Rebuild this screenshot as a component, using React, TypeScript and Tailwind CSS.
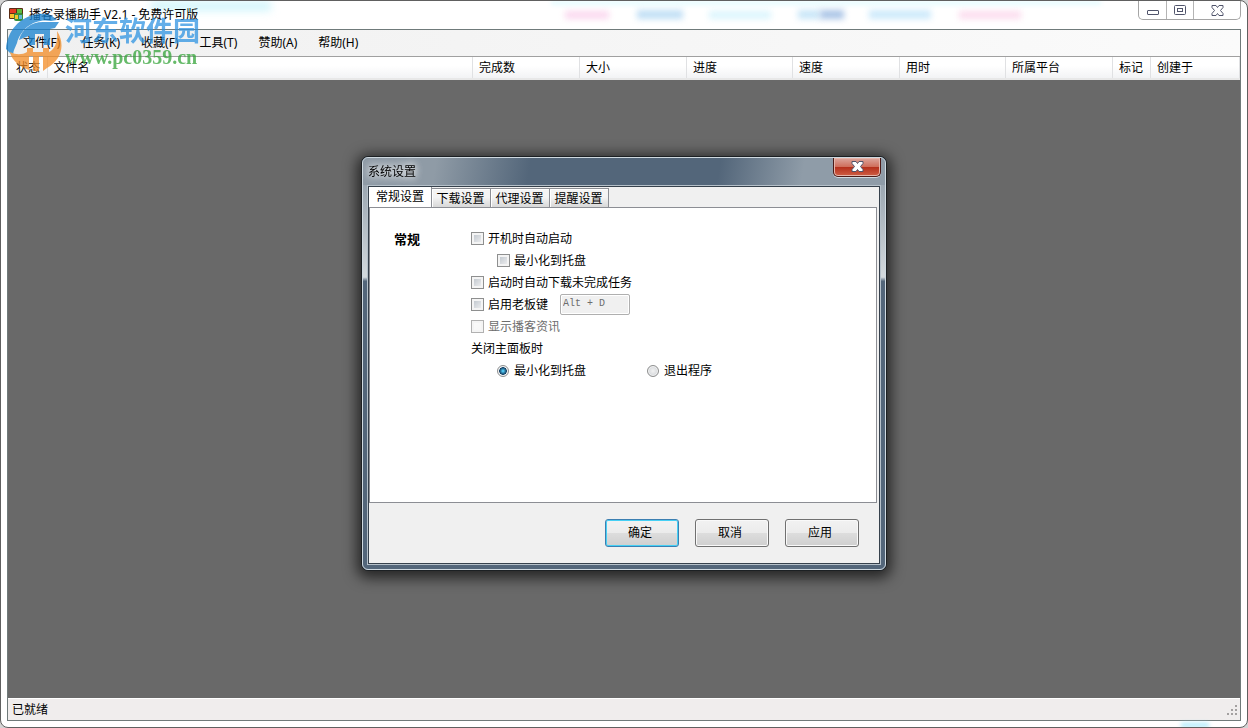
import { useState } from "react";
import type { ReactNode } from "react";

const menus = ["文件(F)", "任务(K)", "收藏(F)", "工具(T)", "赞助(A)", "帮助(H)"];

const columns = [
  { title: "状态", width: "w-[39px]" },
  { title: "文件名", width: "w-auto" },
  { title: "完成数", width: "w-[107px]" },
  { title: "大小", width: "w-[107px]" },
  { title: "进度", width: "w-[106px]" },
  { title: "速度", width: "w-[107px]" },
  { title: "用时", width: "w-[106px]" },
  { title: "所属平台", width: "w-[107px]" },
  { title: "标记", width: "w-[38px]" },
  { title: "创建于", width: "w-[89px]" },
];

const tabs = ["常规设置", "下载设置", "代理设置", "提醒设置"];

const AppIcon = () => (
  <svg width="16" height="16" viewBox="0 0 16 16">
    <rect x="0" y="1" width="14" height="11" rx="1" fill="#5a2c14" />
    <rect x="1" y="2" width="6" height="4" fill="#e23a22" />
    <rect x="8" y="2" width="5" height="4" fill="#5dbb3f" />
    <rect x="1" y="7" width="4" height="4" fill="#f6c32a" />
    <rect x="5" y="6" width="9" height="8" rx="2" fill="#3a8f3c" />
    <rect x="6" y="8" width="3" height="4" fill="#f0c530" />
    <rect x="10" y="8" width="3" height="4" fill="#63b7d8" />
  </svg>
);

const Watermark = () => (
  <div className="pointer-events-none absolute top-[11px] left-1 flex opacity-75">
    <svg width="60" height="60" viewBox="0 0 60 60">
      <path d="M1 37C2 20 14 4 34 2c9-1 14 2 18 6l-6 1C30 6 16 16 12 31l-3 7c-1 3-1 5 0 7z" fill="#1580cf" />
      <path d="M14 28C17 17 26 10 38 10h16l-4 6-5 1v16h-6V22h-9v11h-6v-9c-4 1-7 3-10 4z" fill="#1580cf" />
      <path d="M5 40c6 3 12 3 17 0v-4h6v4h10v-4h6v4c6-3 9-10 8-21 9 14 4 29-10 37l-4 3V44h-4v15h-6V44h-4v14C15 55 7 49 5 40z" fill="#f38b25" />
    </svg>
    <div className="flex flex-col pt-[5px]">
      <span className="text-[27px] leading-7 font-bold text-[#2f94e2]">河东软件园</span>
      <span className="font-['Liberation_Serif',serif] text-xl leading-6 font-bold text-[#33a338]">
        www.pc0359.cn
      </span>
    </div>
  </div>
);

// what shows through the glass of the title bar
const GlassBlur = () => (
  <div className="pointer-events-none absolute inset-0 overflow-hidden rounded-lg">
    <div className="absolute top-0 left-[150px] h-[10px] w-[120px] bg-[#d2f6fc] blur-xs" />
    <div className="absolute top-0 left-[550px] h-1 w-[550px] bg-[#e4fcff] blur-[2px]" />
    <div className="absolute top-[10px] left-[564px] h-2 w-[44px] bg-[#fbd8ef] blur-[3px]" />
    <div className="absolute top-[9px] left-[636px] h-[9px] w-[46px] bg-[#c0dff5] blur-[3px]" />
    <div className="absolute top-[10px] left-[708px] h-2 w-[62px] bg-[#dbf5fd] blur-[3px]" />
    <div className="absolute top-[9px] left-[797px] h-[9px] w-[22px] bg-[#c8e6f8] blur-[3px]" />
    <div className="absolute top-[9px] left-[819px] h-[9px] w-6 bg-[#a9c4e6] blur-[3px]" />
    <div className="absolute top-[9px] left-[868px] h-[9px] w-[62px] bg-[#cdeafb] blur-[3px]" />
    <div className="absolute top-[10px] left-[958px] h-2 w-[62px] bg-[#fcdcee] blur-[3px]" />
    <div className="absolute bottom-0 left-[1180px] h-1 w-7 bg-[#a9e9fb] blur-[2px]" />
  </div>
);

const CloseGlyph = () => (
  <svg width="13" height="11" viewBox="0 0 13 11">
    <path
      d="M1 0.500h4l1.500 2 1.500-2h4v2L9.500 5.500l2.500 3v2H8l-1.500-2-1.500 2H1v-2l2.500-3L1 2.500z"
      fill="#fff"
      stroke="#50546b"
      strokeLinejoin="round"
    />
  </svg>
);

const WindowButtons = () => (
  <div className="flex h-[19px] rounded-b-[5px] border border-t-0 border-[#a5a5a5]">
    <button aria-label="最小化" className="flex w-7 items-center justify-center border-r border-[#b4b4b4]">
      <svg width="12" height="12" viewBox="0 0 12 12">
        <rect x="0.500" y="6.500" width="11" height="4" rx="0.500" fill="#fff" stroke="#50546b" />
      </svg>
    </button>
    <button aria-label="还原" className="flex w-[27px] items-center justify-center border-r border-[#b4b4b4]">
      <svg width="12" height="10" viewBox="0 0 12 10">
        <rect x="0.500" y="0.500" width="11" height="9" rx="1" fill="#fff" stroke="#50546b" />
        <rect x="3.500" y="3.500" width="5" height="3" fill="#fff" stroke="#50546b" />
      </svg>
    </button>
    <button aria-label="关闭" className="flex w-[46px] items-center justify-center">
      <CloseGlyph />
    </button>
  </div>
);

type CheckProps = { label: string; disabled?: boolean; className?: string };

const Check = ({ label, disabled, className = "" }: CheckProps) => (
  <label className={`flex h-[22px] items-center gap-1 ${disabled ? "text-[#6d6d6d]" : ""} ${className}`}>
    <input
      type="checkbox"
      disabled={disabled}
      className="size-[13px] appearance-none border border-[#8e8f8f] bg-linear-to-br from-[#b9c0c8] to-[#f6f6f6] shadow-[inset_0_0_0_2px_#f4f4f4] checked:bg-[#2a6a9c] disabled:border-[#b1b1b1] disabled:from-[#fafafa]"
    />
    {label}
  </label>
);

const Radio = ({ label, defaultChecked }: { label: string; defaultChecked?: boolean }) => (
  <label className="flex h-[22px] items-center gap-[5px]">
    <input
      type="radio"
      name="close-action"
      defaultChecked={defaultChecked}
      className="size-3 appearance-none rounded-full border border-[#8e8f8f] bg-radial from-[#f2f2f2] to-[#c9cdd2] shadow-[inset_0_0_0_1px_#f4f4f4] checked:from-[#4fc3ee] checked:from-10% checked:via-[#123f63] checked:via-50% checked:to-[#eef3f6] checked:to-60%"
    />
    {label}
  </label>
);

const DialogButton = ({ children, primary }: { children: ReactNode; primary?: boolean }) => (
  <button
    className={`h-7 w-[74px] rounded-[3px] border pr-1 ${
      primary
        ? "border-[#3c7fb1] shadow-[inset_0_0_0_1px_#46d0f5]"
        : "border-[#707070] shadow-[inset_0_0_0_1px_#f9f9f9]"
    } bg-[linear-gradient(#f2f2f2,#ebebeb_49%,#dddddd_50%,#cfcfcf)]`}
  >
    {children}
  </button>
);

const SettingsDialog = () => {
  const [active, setActive] = useState(0);

  return (
    <div
      role="dialog"
      aria-label="系统设置"
      className="flex w-[526px] flex-col rounded-[7px] border border-[#1c2023] bg-[#53667a] shadow-[0_3px_14px_4px_rgba(0,0,0,0.65)]"
    >
      <div className="flex flex-col rounded-md border border-[#cfd9e0] bg-linear-to-b from-[#8c99a5] from-0% via-[#d3d9dd] via-29% to-[#53667a] to-30% px-1 pb-1">
        <div className="-mx-1 flex h-[27px] items-start justify-between rounded-t-md bg-[linear-gradient(100deg,#8f9ba6_14%,#53667a_32%,#53667a_68%,#8f9ca8_84%)] pl-[5px]">
          <span className="leading-[28px] [text-shadow:0_0_8px_#fff,0_0_8px_#fff]">系统设置</span>
          <button
            aria-label="关闭"
            className="mr-1 flex h-[19px] w-12 items-center justify-center rounded-b-[5px] border border-t-0 border-[#4c1b18] bg-[linear-gradient(#dda79e,#cf6f5c_48%,#b5301c_52%,#cf5f45)] shadow-[inset_0_0_0_1px_#e6b5aa,0_1px_0_#cfd9e0]"
          >
            <CloseGlyph />
          </button>
        </div>
        <div className="border border-[#b5c0c9]">
          <div className="border border-[#36414c] bg-[#f0f0f0]">
            <div role="tablist" className="flex items-end">
              {tabs.map((tab, i) => (
                <button
                  key={tab}
                  role="tab"
                  aria-selected={i === active}
                  onClick={() => setActive(i)}
                  className={
                    i === active
                      ? "h-5 w-[63px] border-r border-[#8c8e94] bg-white"
                      : "h-[19px] w-[59px] border-t border-r border-[#8c8e94] bg-linear-to-b from-[#f4f4f4] from-45% to-[#d8d8d8] pt-[2px] pr-px shadow-[inset_1px_1px_0_#fff]"
                  }
                >
                  {tab}
                </button>
              ))}
            </div>
            <div role="tabpanel" className="mr-[2px] flex min-h-[296px] border border-[#8c8e94] bg-white pt-5">
              <h2 className="w-[101px] pl-6 text-[13px] leading-[22px] font-bold">常规</h2>
              <div className="flex flex-col">
                <Check label="开机时自动启动" />
                <Check label="最小化到托盘" className="ml-[26px]" />
                <Check label="启动时自动下载未完成任务" />
                <div className="flex h-[22px] items-center gap-3">
                  <Check label="启用老板键" />
                  <input
                    aria-label="老板键"
                    defaultValue="Alt + D"
                    disabled
                    className="h-[21px] w-[70px] rounded-xs border border-[#afafaf] bg-[#f0f0f0] px-[2px] pb-[3px] font-['Liberation_Mono',monospace] text-[10px] text-[#6d6d6d] shadow-[inset_0_0_0_1px_#fff]"
                  />
                </div>
                <Check label="显示播客资讯" disabled />
                <span className="h-[22px] leading-[22px]">关闭主面板时</span>
                <div className="ml-[26px] flex gap-[61px]">
                  <Radio label="最小化到托盘" defaultChecked />
                  <Radio label="退出程序" />
                </div>
              </div>
            </div>
            <div className="flex justify-end gap-4 py-4 pr-5">
              <DialogButton primary>确定</DialogButton>
              <DialogButton>取消</DialogButton>
              <DialogButton>应用</DialogButton>
            </div>
          </div>
        </div>
      </div>
    </div>
  );
};

const App = () => {
  return (
    <div className="bg-[#d4d4d4] font-['Noto_Sans','Noto_Sans_CJK_SC',sans-serif] text-xs text-black">
      <div className="relative flex min-h-screen flex-col rounded-lg border border-[#606060] bg-white px-[6px] pb-[6px]">
        <GlassBlur />
        <header className="relative flex h-7 items-start justify-between pl-[2px]">
          <div className="flex items-center gap-1 pt-[5px]">
            <AppIcon />
            <h1 className="leading-[18px]">播客录播助手 V2.1 - 免费许可版</h1>
          </div>
          <WindowButtons />
        </header>
        <main className="flex grow flex-col border border-[#6f7a7a]">
          <nav className="flex h-[26px] items-center gap-[21px] bg-linear-to-r from-[#f0f0f0] to-[#fbfbfb] pl-[15px]">
            {menus.map((menu) => (
              <button key={menu}>{menu}</button>
            ))}
          </nav>
          <div className="grow border-t border-[#a0a0a0] bg-[#696969]">
            <table className="w-full table-fixed border-b-2 border-[#e8e8e8] bg-linear-to-b from-white from-40% to-[#f1f2f4]">
              <thead>
                <tr>
                  {columns.map((col) => (
                    <th
                      key={col.title}
                      className={`h-[22px] border-r border-b border-r-[#e0e1e3] border-b-[#d5d5d5] pl-[6px] text-left leading-5 font-normal whitespace-nowrap first:pl-2 ${col.width}`}
                    >
                      {col.title}
                    </th>
                  ))}
                </tr>
              </thead>
            </table>
          </div>
          <footer className="flex h-[22px] items-center justify-between border-t border-white bg-[#f0eded] pl-1">
            <span>已就绪</span>
            <svg width="14" height="14" viewBox="0 0 14 14" fill="#a3a0a0">
              <path d="M9 2h2v2H9zM5 6h2v2H5zM9 6h2v2H9zM1 10h2v2H1zM5 10h2v2H5zM9 10h2v2H9z" />
            </svg>
          </footer>
        </main>
        <Watermark />
      </div>
      <div className="fixed inset-0 flex items-center justify-center pb-[2px]">
        <SettingsDialog />
      </div>
    </div>
  );
};

export default App;
